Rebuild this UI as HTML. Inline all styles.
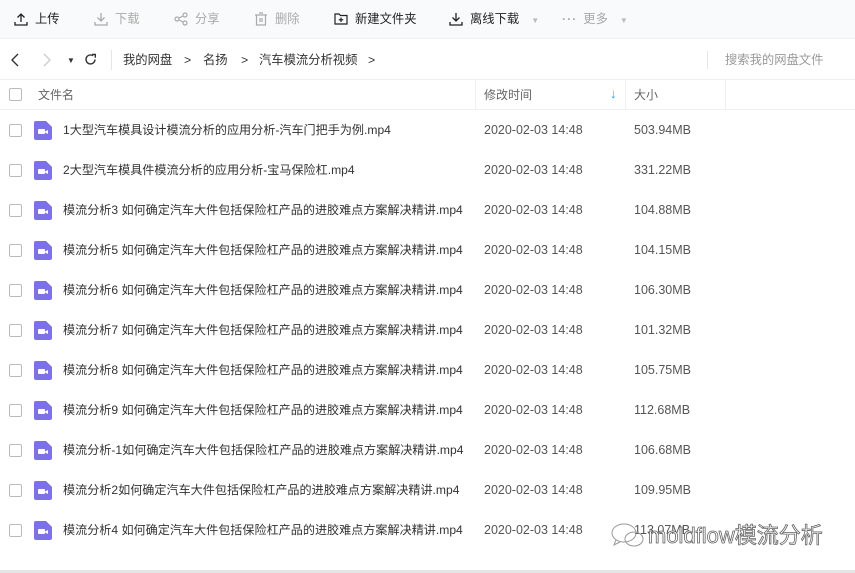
<!DOCTYPE html>
<html><head><meta charset="utf-8"><style>
*{margin:0;padding:0;box-sizing:border-box}
body{width:855px;height:573px;overflow:hidden;background:#fff;font-family:"Liberation Sans","Noto Sans CJK SC",sans-serif;font-size:12px;line-height:16px;color:#333;position:relative}
.tb{position:absolute;left:0;top:0;width:855px;height:39px;background:#f9fafb;border-bottom:1px solid #eef0f2}
.t{position:absolute;top:11px;font-size:12.3px;line-height:16px;height:16px;color:#222;white-space:nowrap}
.t.g{color:#aaa}
.t svg{position:absolute;top:1px}
.bc{position:absolute;top:40px;left:0;width:855px;height:40px;border-bottom:1px solid #eef0f2}
.a{position:absolute;top:12px;white-space:nowrap;font-size:12.3px;line-height:16px;color:#333}
.hd{position:absolute;top:80px;left:0;width:855px;height:30px;border-bottom:1px solid #eef0f2;color:#666}
.hd div{line-height:16px}
.cb{position:absolute;width:13px;height:13px;border:1px solid #bbb;border-radius:2px;background:#fff}
.row{position:absolute;left:0;width:855px;height:40px}
.ic{position:absolute;left:34px;top:11px;width:18px;height:19px;background:#7d71e8;border-radius:2px;clip-path:polygon(0 0,12px 0,18px 6px,18px 100%,0 100%)}
.ic:after{content:"";position:absolute;left:4px;top:8px;width:7px;height:5px;background:#fff;border-radius:1px}
.ic:before{content:"";position:absolute;left:10px;top:8.5px;width:0;height:0;border-top:2px solid transparent;border-bottom:2px solid transparent;border-right:4px solid #fff}
.nm{position:absolute;left:63px;top:12px;white-space:nowrap;font-size:12.1px;line-height:16px;color:#333}
.dt{position:absolute;left:484px;top:12px;color:#555;font-size:12.5px;line-height:16px}
.sz{position:absolute;left:634px;top:12px;color:#555;font-size:12.5px;line-height:16px}
.sep{position:absolute;top:0;width:1px;height:30px;background:#eef0f2}
</style></head><body>
<div class="tb">
<div class="t" style="left:14px"><svg width="14" height="14" viewBox="0 0 14 14" style="left:0" fill="none" stroke="#222" stroke-width="1.3"><path d="M7 10V2M3.5 5.5L7 2l3.5 3.5M1 10v3h12v-3"/></svg><span style="margin-left:21px">上传</span></div>
<div class="t g" style="left:94px"><svg width="14" height="14" viewBox="0 0 14 14" style="left:0" fill="none" stroke="#aaa" stroke-width="1.3"><path d="M7 1v8M3.5 5.5L7 9l3.5-3.5M1 10v3h12v-3"/></svg><span style="margin-left:21px">下载</span></div>
<div class="t g" style="left:174px"><svg width="14" height="14" viewBox="0 0 14 14" style="left:0" fill="none" stroke="#aaa" stroke-width="1.2"><circle cx="3" cy="7" r="2"/><circle cx="11" cy="3" r="2"/><circle cx="11" cy="11" r="2"/><path d="M5 6l4-2M5 8l4 2"/></svg><span style="margin-left:21px">分享</span></div>
<div class="t g" style="left:254px"><svg width="14" height="14" viewBox="0 0 14 14" style="left:0" fill="none" stroke="#aaa" stroke-width="1.2"><path d="M1 3h12M5 1h4M2.5 3v10h9V3M6 6v4M8 6v4"/></svg><span style="margin-left:21px">删除</span></div>
<div class="t" style="left:334px"><svg width="14" height="14" viewBox="0 0 14 14" style="left:0" fill="none" stroke="#222" stroke-width="1.2"><path d="M1 2h4l1.5 1.5H13V12H1zM7 5.5v4.5M4.8 7.75h4.4"/></svg><span style="margin-left:21px">新建文件夹</span></div>
<div class="t" style="left:449px"><svg width="14" height="14" viewBox="0 0 14 14" style="left:0" fill="none" stroke="#222" stroke-width="1.3"><path d="M7 1v8M3.5 5.5L7 9l3.5-3.5M1 10v3h12v-3"/></svg><span style="margin-left:21px">离线下载</span><span style="margin-left:12px;color:#bbb;font-size:8px">▼</span></div>
<div class="t g" style="left:562px"><span style="letter-spacing:1px;font-weight:bold">···</span><span style="margin-left:6px">更多</span><span style="margin-left:12px;color:#bbb;font-size:8px">▼</span></div>
</div>
<div class="bc">
<svg style="position:absolute;left:10px;top:13px" width="10" height="14" viewBox="0 0 10 14" fill="none" stroke="#333" stroke-width="1.4"><path d="M8 1L2 7l6 6"/></svg>
<svg style="position:absolute;left:42px;top:13px" width="10" height="14" viewBox="0 0 10 14" fill="none" stroke="#ccc" stroke-width="1.4"><path d="M2 1l6 6-6 6"/></svg>
<div class="a" style="left:67px;top:13px;font-size:8px">▼</div>
<svg style="position:absolute;left:84px;top:13px" width="13" height="13" viewBox="0 0 13 13" fill="none" stroke="#333" stroke-width="1.4"><path d="M11 6.5A4.5 4.5 0 1 1 9 2.7"/><path d="M8 1.5h3.3v3.3" /></svg>
<div style="position:absolute;left:111px;top:10px;width:1px;height:20px;background:#e5e5e5"></div>
<div class="a" style="left:123px">我的网盘</div>
<div class="a" style="left:184px">&gt;</div>
<div class="a" style="left:203px">名扬</div>
<div class="a" style="left:241px">&gt;</div>
<div class="a" style="left:259px">汽车模流分析视频</div>
<div class="a" style="left:368px">&gt;</div>
<div style="position:absolute;left:707px;top:11px;width:1px;height:18px;background:#e5e5e5"></div>
<div class="a" style="left:725px;color:#999">搜索我的网盘文件</div>
</div>
<div class="hd">
<div class="cb" style="left:9px;top:8px"></div>
<div style="position:absolute;left:38px;top:7px">文件名</div>
<div class="sep" style="left:475px"></div>
<div style="position:absolute;left:484px;top:7px">修改时间</div>
<div style="position:absolute;left:610px;top:6px;color:#2b9af3;font-weight:bold;font-size:13px">↓</div>
<div class="sep" style="left:625px"></div>
<div style="position:absolute;left:634px;top:7px">大小</div>
<div class="sep" style="left:725px"></div>
</div>
<div class="row" style="top:110px"><div class="cb" style="left:9px;top:14px"></div><div class="ic"></div><div class="nm">1大型汽车模具设计模流分析的应用分析-汽车门把手为例.mp4</div><div class="dt">2020-02-03 14:48</div><div class="sz">503.94MB</div></div>
<div class="row" style="top:150px"><div class="cb" style="left:9px;top:14px"></div><div class="ic"></div><div class="nm">2大型汽车模具件模流分析的应用分析-宝马保险杠.mp4</div><div class="dt">2020-02-03 14:48</div><div class="sz">331.22MB</div></div>
<div class="row" style="top:190px"><div class="cb" style="left:9px;top:14px"></div><div class="ic"></div><div class="nm">模流分析3 如何确定汽车大件包括保险杠产品的进胶难点方案解决精讲.mp4</div><div class="dt">2020-02-03 14:48</div><div class="sz">104.88MB</div></div>
<div class="row" style="top:230px"><div class="cb" style="left:9px;top:14px"></div><div class="ic"></div><div class="nm">模流分析5 如何确定汽车大件包括保险杠产品的进胶难点方案解决精讲.mp4</div><div class="dt">2020-02-03 14:48</div><div class="sz">104.15MB</div></div>
<div class="row" style="top:270px"><div class="cb" style="left:9px;top:14px"></div><div class="ic"></div><div class="nm">模流分析6 如何确定汽车大件包括保险杠产品的进胶难点方案解决精讲.mp4</div><div class="dt">2020-02-03 14:48</div><div class="sz">106.30MB</div></div>
<div class="row" style="top:310px"><div class="cb" style="left:9px;top:14px"></div><div class="ic"></div><div class="nm">模流分析7 如何确定汽车大件包括保险杠产品的进胶难点方案解决精讲.mp4</div><div class="dt">2020-02-03 14:48</div><div class="sz">101.32MB</div></div>
<div class="row" style="top:350px"><div class="cb" style="left:9px;top:14px"></div><div class="ic"></div><div class="nm">模流分析8 如何确定汽车大件包括保险杠产品的进胶难点方案解决精讲.mp4</div><div class="dt">2020-02-03 14:48</div><div class="sz">105.75MB</div></div>
<div class="row" style="top:390px"><div class="cb" style="left:9px;top:14px"></div><div class="ic"></div><div class="nm">模流分析9 如何确定汽车大件包括保险杠产品的进胶难点方案解决精讲.mp4</div><div class="dt">2020-02-03 14:48</div><div class="sz">112.68MB</div></div>
<div class="row" style="top:430px"><div class="cb" style="left:9px;top:14px"></div><div class="ic"></div><div class="nm">模流分析-1如何确定汽车大件包括保险杠产品的进胶难点方案解决精讲.mp4</div><div class="dt">2020-02-03 14:48</div><div class="sz">106.68MB</div></div>
<div class="row" style="top:470px"><div class="cb" style="left:9px;top:14px"></div><div class="ic"></div><div class="nm">模流分析2如何确定汽车大件包括保险杠产品的进胶难点方案解决精讲.mp4</div><div class="dt">2020-02-03 14:48</div><div class="sz">109.95MB</div></div>
<div class="row" style="top:510px"><div class="cb" style="left:9px;top:14px"></div><div class="ic"></div><div class="nm">模流分析4 如何确定汽车大件包括保险杠产品的进胶难点方案解决精讲.mp4</div><div class="dt">2020-02-03 14:48</div><div class="sz">113.07MB</div></div>
<svg style="position:absolute;left:610px;top:521px" width="36" height="30" viewBox="0 0 36 30" fill="none" stroke="#999" stroke-width="1"><ellipse cx="14" cy="12" rx="12" ry="9"/><path d="M6 19l-2 5 6-3"/><ellipse cx="24" cy="18" rx="9" ry="7"/></svg>
<div style="position:absolute;left:648px;top:522px;font-size:22px;line-height:28px;color:#fff;-webkit-text-stroke:0.8px #666;white-space:nowrap">moldflow模流分析</div>
<div style="position:absolute;left:0;top:570px;width:855px;height:3px;background:#e5e5e5"></div>
</body></html>
